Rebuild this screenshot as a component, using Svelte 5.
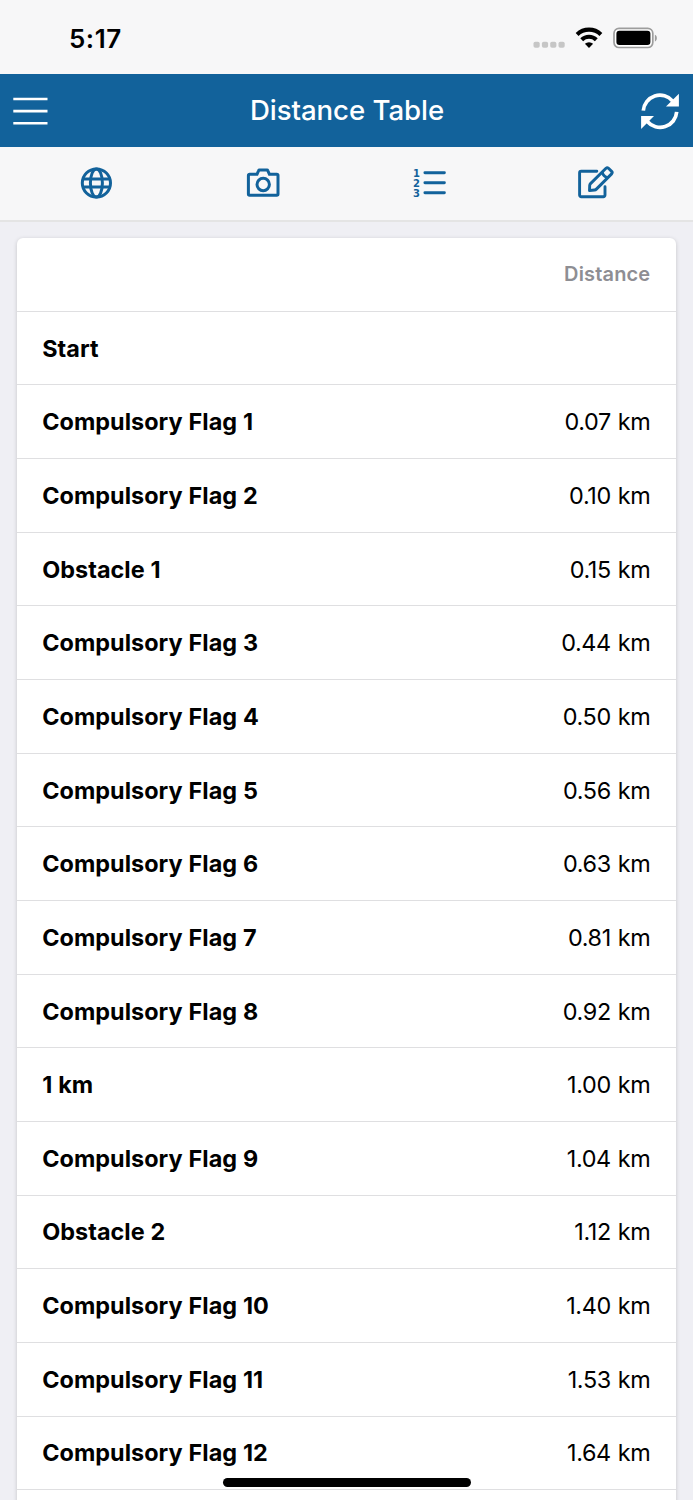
<script>
    const rows = [
        { name: "Start", distance: "" },
        { name: "Compulsory Flag 1", distance: "0.07 km" },
        { name: "Compulsory Flag 2", distance: "0.10 km" },
        { name: "Obstacle 1", distance: "0.15 km" },
        { name: "Compulsory Flag 3", distance: "0.44 km" },
        { name: "Compulsory Flag 4", distance: "0.50 km" },
        { name: "Compulsory Flag 5", distance: "0.56 km" },
        { name: "Compulsory Flag 6", distance: "0.63 km" },
        { name: "Compulsory Flag 7", distance: "0.81 km" },
        { name: "Compulsory Flag 8", distance: "0.92 km" },
        { name: "1 km", distance: "1.00 km" },
        { name: "Compulsory Flag 9", distance: "1.04 km" },
        { name: "Obstacle 2", distance: "1.12 km" },
        { name: "Compulsory Flag 10", distance: "1.40 km" },
        { name: "Compulsory Flag 11", distance: "1.53 km" },
        { name: "Compulsory Flag 12", distance: "1.64 km" },
    ];
</script>

<div class="screen">
    <div class="statusBar">
        <span class="time">5:17</span>
        <div class="statusIcons">
            <svg class="signal" width="32" height="24" viewBox="0 0 32 24" fill="#c6c6c6">
                <rect x="0.5" y="16.8" width="6.2" height="6" rx="1.8" />
                <rect x="8.9" y="16.8" width="6.2" height="6" rx="1.8" />
                <rect x="17.2" y="16.8" width="6.2" height="6" rx="1.8" />
                <rect x="25.5" y="16.8" width="6.2" height="6" rx="1.8" />
            </svg>
            <svg class="wifi" width="28" height="24" viewBox="0 0 28 24">
                <g fill="none" stroke="#000" stroke-width="4.1">
                    <path d="M2.1 9.4a17.2 17.2 0 0 1 23.8 0" />
                    <path d="M6.7 14.7a10.5 10.5 0 0 1 14.6 0" />
                </g>
                <path d="M14 22.9l-4.1-4.1a6 6 0 0 1 8.2 0z" />
            </svg>
            <svg class="battery" width="46" height="24" viewBox="0 0 46 24">
                <rect x="1" y="3.3" width="38.8" height="19.2" rx="5" fill="#fff" stroke="#9d9d9d" stroke-width="1.7" />
                <rect x="3.4" y="5.8" width="34" height="14.2" rx="3" />
                <path d="M41.9 9.7c2.6 1 2.6 5.7 0 6.7z" fill="#9d9d9d" />
            </svg>
        </div>
    </div>

    <header class="navbar">
        <button type="button" aria-label="Menu">
            <svg width="35" height="28" viewBox="0 0 35 28" stroke="#fff" stroke-width="2.6">
                <path d="M0.3 2h34.2M0.3 14.1h34.2M0.3 26.2h34.2" />
            </svg>
        </button>
        <h1>Distance Table</h1>
        <button type="button" aria-label="Refresh">
            <svg width="40" height="40" viewBox="0 0 40 40">
                <g fill="none" stroke="#fff" stroke-width="3.7">
                    <path d="M3.3 19.7a16.7 16.7 0 0 1 29.4-9.6" />
                    <path d="M36.7 20.9a16.7 16.7 0 0 1 -29.4 9.6" />
                </g>
                <path d="M38.9 2.7v12.8H26z M1.1 37.9V25.1H14z" fill="#fff" />
            </svg>
        </button>
    </header>

    <nav class="toolbar">
        <button type="button" aria-label="Map">
            <svg width="32" height="32" viewBox="0 0 32 32">
                <circle cx="16.4" cy="16" r="14.1" />
                <ellipse cx="16.4" cy="16" rx="6" ry="14.1" />
                <path d="M2.9 12h27M2.9 20h27" />
            </svg>
        </button>
        <button type="button" aria-label="Photos">
            <svg width="34" height="30" viewBox="0 0 34 30">
                <path d="M3.6 6.3h7.4l1.6-3.7q.2-.5.8-.5H21q.6 0 .8.5l1.6 3.7h7.4a1.2 1.2 0 0 1 1.2 1.2v18.5a1.2 1.2 0 0 1-1.2 1.2H3.6A1.2 1.2 0 0 1 2.4 26V7.5a1.2 1.2 0 0 1 1.2-1.2z" />
                <circle cx="17.2" cy="16.5" r="6.2" />
            </svg>
        </button>
        <button type="button" aria-label="List">
            <svg class="list" width="34" height="30" viewBox="0 0 34 30">
                <path d="M11.9 4.8h19.5M11.9 14.8h19.5M11.9 24.8h19.5" stroke-linecap="round" />
                <text x="0" y="8.6">1</text>
                <text x="0" y="18.6">2</text>
                <text x="0" y="28.6">3</text>
            </svg>
        </button>
        <button type="button" aria-label="Edit">
            <svg class="edit" width="36" height="33" viewBox="0 0 36 33">
                <path d="M18.8 5.2H3.2A1.6 1.6 0 0 0 1.6 6.8v22.3a1.6 1.6 0 0 0 1.6 1.6h22.2a1.6 1.6 0 0 0 1.6-1.6V20.8" stroke-linecap="round" />
                <path d="M12.5 17.6L28 2.3q1.2-1.1 2.5 0l3.1 3.1q1.2 1.2 0 2.5L18.4 23.1q-.8.8-1.8.9l-5.1.5.2-5.2q.1-1 .8-1.7z" stroke-linejoin="round" />
                <path d="M24.2 6.2q1.1 4.5 5.7 5.6" />
            </svg>
        </button>
    </nav>

    <main>
        <div class="card">
            <div class="row head">
                <span></span>
                <span>Distance</span>
            </div>
            {#each rows as row}
                <div class="row">
                    <strong>{row.name}</strong>
                    <span>{row.distance}</span>
                </div>
            {/each}
            <div class="row"></div>
        </div>
    </main>

    <div class="homeIndicator"></div>
</div>

<style>
    :global(body) {
        margin: 0;
    }

    .screen {
        position: relative;
        display: flex;
        flex-direction: column;
        height: 1500px;
        overflow: hidden;
        background: #efeff4;
        font-family: Inter, "Liberation Sans", sans-serif;
        color: #000;
    }

    .statusBar {
        flex: none;
        display: flex;
        justify-content: space-between;
        box-sizing: border-box;
        height: 73.7px;
        padding: 22px 34px 0 69px;
        background: #f7f7f8;
    }

    .time {
        padding-top: 1px;
        font-size: 26px;
        font-weight: 600;
        line-height: 32px;
        letter-spacing: 0.5px;
    }

    .statusIcons {
        display: flex;
        align-items: flex-start;
        padding-top: 3px;
    }

    .signal {
        margin-right: 1px;
    }

    .wifi {
        margin-left: 9px;
    }

    .battery {
        margin-left: 10px;
    }

    .navbar {
        flex: none;
        display: flex;
        align-items: center;
        justify-content: space-between;
        box-sizing: border-box;
        height: 73.6px;
        padding: 2px 13px 0;
        background: #12629b;
        color: #fff;
    }

    .navbar h1 {
        margin: 0;
        padding: 0 0 2px 6px;
        font-size: 27.6px;
        font-weight: 550;
        line-height: 34px;
        letter-spacing: -0.05px;
    }

    button {
        display: flex;
        padding: 0;
        border: 0;
        background: none;
    }

    .toolbar {
        flex: none;
        display: grid;
        grid-template-columns: repeat(4, 1fr);
        box-sizing: border-box;
        height: 74.5px;
        padding: 0 13px 2px;
        border-bottom: 2px solid #e4e4e4;
        background: #f7f7f8;
    }

    .toolbar button {
        align-items: center;
        justify-content: center;
    }

    .toolbar svg {
        overflow: visible;
        fill: none;
        stroke: #12629b;
        stroke-width: 3;
    }

    .toolbar .edit {
        margin-right: 2px;
        stroke-width: 2.9;
    }

    .toolbar .list {
        stroke-width: 2.9;
    }

    .list text {
        fill: #12629b;
        stroke: none;
        font: 700 10px "DejaVu Sans", sans-serif;
    }

    main {
        padding: 16.1px 16.7px 0;
    }

    .card {
        overflow: hidden;
        border-radius: 6px;
        background: #fff;
        box-shadow: 0 1px 4px rgba(0, 0, 0, 0.18);
    }

    .row {
        display: flex;
        align-items: center;
        justify-content: space-between;
        box-sizing: border-box;
        height: 73.67px;
        padding: 0 26px 0 25.5px;
        border-bottom: 1px solid #dfdfe1;
        font-size: 23.4px;
    }

    .row:first-child {
        height: 73.9px;
    }

    .row strong {
        font-weight: 650;
        letter-spacing: 0.04px;
        word-spacing: 0.3px;
    }

    .row span {
        letter-spacing: -0.35px;
        word-spacing: 0.6px;
    }

    .row.head span {
        letter-spacing: 0.15px;
    }

    .head {
        font-size: 20px;
        font-weight: 600;
        color: #8e8e93;
    }

    .homeIndicator {
        position: absolute;
        bottom: 13.5px;
        left: 222.5px;
        width: 248px;
        height: 8.5px;
        border-radius: 5px;
        background: #000;
    }
</style>
